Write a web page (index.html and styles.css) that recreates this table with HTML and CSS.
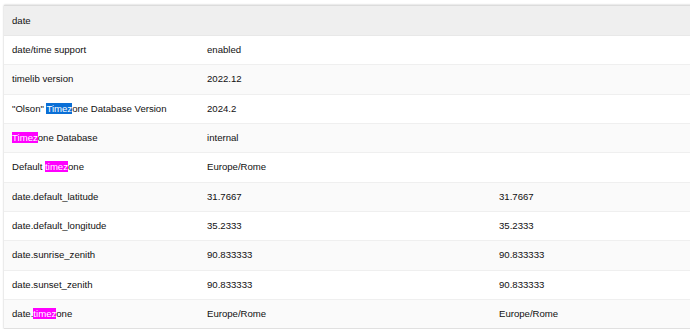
FILE: index.html
```html
<!DOCTYPE html>
<html>
<head>
<meta charset="utf-8">
<link rel="stylesheet" href="styles.css">
</head>
<body>
<div class="page">
<table class="info">
  <colgroup><col class="c1"><col class="c2"><col class="c3"></colgroup>
  <thead>
    <tr><th colspan="3">date</th></tr>
  </thead>
  <tbody>
    <tr><td>date/time support</td><td>enabled</td><td></td></tr>
    <tr><td>timelib version</td><td>2022.12</td><td></td></tr>
    <tr><td>"Olson" <span class="sel">Timez</span>one Database Version</td><td>2024.2</td><td></td></tr>
    <tr><td><span class="hl">Timez</span>one Database</td><td>internal</td><td></td></tr>
    <tr><td>Default <span class="hl">timez</span>one</td><td>Europe/Rome</td><td></td></tr>
    <tr><td>date.default_latitude</td><td>31.7667</td><td>31.7667</td></tr>
    <tr><td>date.default_longitude</td><td>35.2333</td><td>35.2333</td></tr>
    <tr><td>date.sunrise_zenith</td><td>90.833333</td><td>90.833333</td></tr>
    <tr><td>date.sunset_zenith</td><td>90.833333</td><td>90.833333</td></tr>
    <tr><td>date.<span class="hl">timez</span>one</td><td>Europe/Rome</td><td>Europe/Rome</td></tr>
  </tbody>
</table>
</div>
</body>
</html>
```

FILE: styles.css
```css
html, body {
  margin: 0;
  padding: 0;
  background: #ffffff;
  overflow: hidden;
}
.page {
  padding: 5px 0 0 4px;
}
.info {
  width: 688px;
  border-collapse: collapse;
  table-layout: fixed;
  font-family: "Liberation Sans", Arial, sans-serif;
  font-size: 9.6px;
  color: #111111;
  box-shadow: 0 0 2px rgba(0, 0, 0, 0.25);
}
.c1 { width: 195px; }
.c2 { width: 292px; }
.c3 { width: 201px; }
.info th {
  background: #efefef;
  text-align: left;
  font-weight: normal;
  padding: 8px 8px;
  line-height: 13px;
  height: 13px;
  border-top: 1px solid #dcdcdc;
  border-bottom: 1px solid #e8e8e8;
}
.info td {
  padding: 8px 8px;
  line-height: 12.33px;
  height: 12.33px;
  border-bottom: 1px solid #efefef;
  white-space: nowrap;
}
.info tbody tr:nth-child(even) td {
  background: #fafafa;
}
.info tbody tr:last-child td {
  border-bottom: 1px solid #e0e0e0;
}
.sel {
  background: #0a6fd6;
  color: #ffffff;
}
.hl {
  background: #ff00ff;
  color: #ffffff;
}
```
